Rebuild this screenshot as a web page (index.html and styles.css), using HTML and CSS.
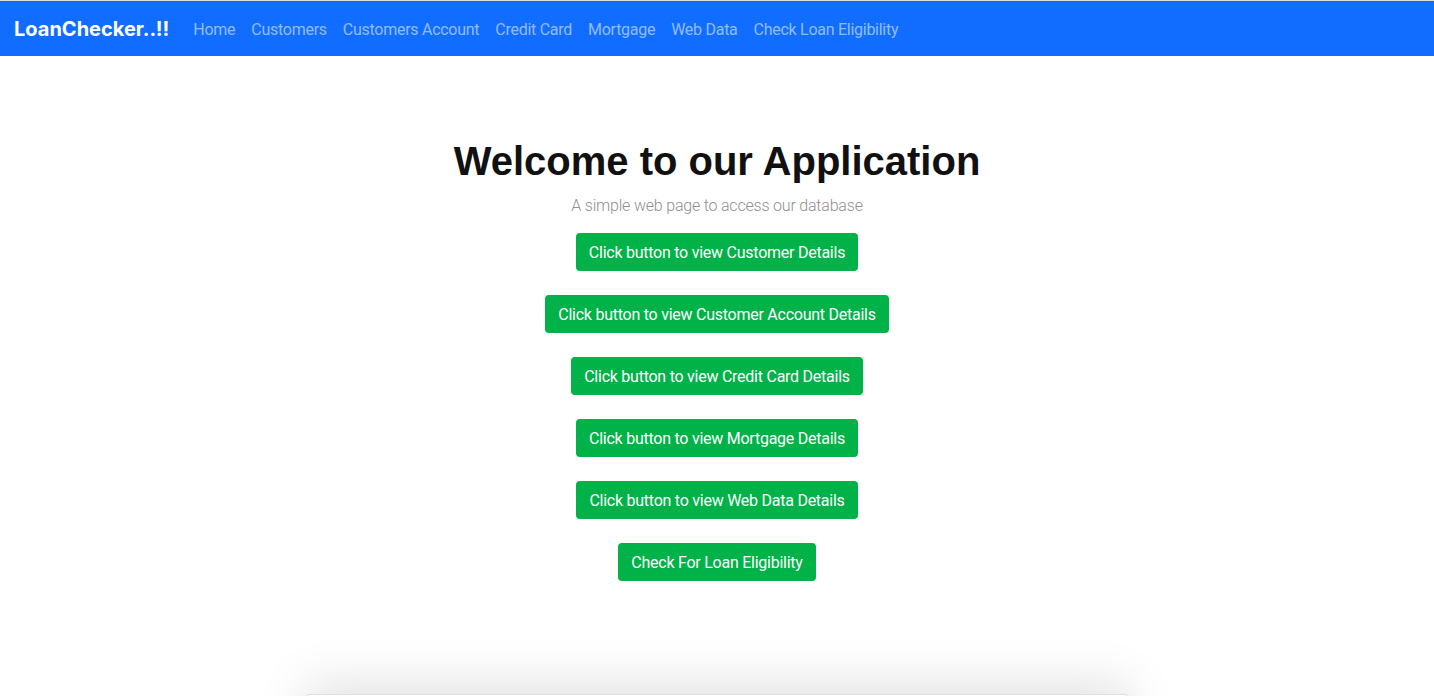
FILE: index.html
```html
<!DOCTYPE html>
<html lang="en">
<head>
<meta charset="utf-8">
<title>LoanChecker</title>
<link rel="stylesheet" href="styles.css">
</head>
<body>
<nav class="navbar">
  <a class="brand" href="#">LoanChecker..!!</a>
  <ul class="nav-links">
    <li><a href="#">Home</a></li>
    <li><a href="#">Customers</a></li>
    <li><a href="#">Customers Account</a></li>
    <li><a href="#">Credit Card</a></li>
    <li><a href="#">Mortgage</a></li>
    <li><a href="#">Web Data</a></li>
    <li><a href="#">Check Loan Eligibility</a></li>
  </ul>
</nav>
<main class="main">
  <h1 class="title">Welcome to our Application</h1>
  <p class="lead">A simple web page to access our database</p>
  <div class="actions">
    <button class="btn">Click button to view Customer Details</button>
    <button class="btn">Click button to view Customer Account Details</button>
    <button class="btn">Click button to view Credit Card Details</button>
    <button class="btn">Click button to view Mortgage Details</button>
    <button class="btn">Click button to view Web Data Details</button>
    <button class="btn">Check For Loan Eligibility</button>
  </div>
  <section class="card"></section>
</main>
</body>
</html>
```
FILE: styles.css
```css
* { box-sizing: border-box; }
html, body { margin: 0; padding: 0; background: #fff; }
body {
  font-family: Roboto, "Liberation Sans", sans-serif;
  overflow: hidden;
  height: 696px;
  border-top: 1px solid #dcdcdc;
}
.navbar {
  display: flex;
  align-items: center;
  height: 55px;
  background: #116dff;
  padding: 0 14px;
}
.brand {
  font-family: Inter, "Liberation Sans", sans-serif;
  font-weight: 700;
  font-size: 20px;
  color: #fff;
  text-decoration: none;
  margin-right: 16px;
}
.nav-links {
  display: flex;
  list-style: none;
  margin: 0;
  padding: 0;
}
.nav-links a {
  display: block;
  padding: 9px 8px 7px;
  font-size: 16px;
  letter-spacing: -0.27px;
  color: rgba(255, 255, 255, 0.55);
  text-decoration: none;
}
.main {
  display: flex;
  flex-direction: column;
  align-items: center;
  padding-top: 81px;
}
.title {
  font-family: "Liberation Sans", Arial, sans-serif;
  font-weight: 700;
  font-size: 40px;
  line-height: 48px;
  color: #111;
  margin: 0 0 9px;
}
.lead {
  font-size: 16px;
  font-weight: 300;
  line-height: 24px;
  letter-spacing: -0.2px;
  color: #8f8f8f;
  margin: 0 0 15px;
}
.actions {
  display: flex;
  flex-direction: column;
  align-items: center;
  gap: 24px;
}
.btn {
  font-family: Roboto, "Liberation Sans", sans-serif;
  font-size: 16px;
  line-height: 24px;
  letter-spacing: -0.25px;
  padding: 8px 13px 6px;
  color: #fff;
  background: #00b247;
  border: none;
  border-radius: 4px;
}
.card {
  width: 826px;
  height: 220px;
  margin-top: 113px;
  border: 1px solid #dedede;
  border-radius: 6px;
  box-shadow: 0 -10px 50px rgba(0, 0, 0, 0.12);
  background: #fff;
}
```
